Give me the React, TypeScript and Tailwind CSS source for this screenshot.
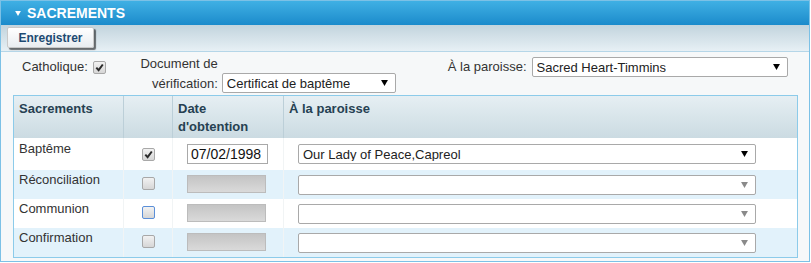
import React from 'react';

const font = { fontFamily: '"Liberation Sans", Arial, sans-serif' };

// Small browser-like checkbox
const Check: React.FC<{ checked?: boolean; focus?: boolean }> = ({ checked, focus }) => (
  <span
    className={`inline-flex h-[13px] w-[13px] items-center justify-center rounded-[2px] border bg-gradient-to-b from-[#f2f2f2] to-[#d6d6d6] ${
      focus ? 'border-[#5b8fd8]' : 'border-[#a8a8a8]'
    }`}
  >
    {checked && (
      <svg width="9" height="9" viewBox="0 0 9 9">
        <path d="M1.3 4.6 L3.6 7.1 L7.8 1.5" fill="none" stroke="#2b2b2b" strokeWidth="2" />
      </svg>
    )}
  </span>
);

const Arrow: React.FC<{ color: string; w?: number }> = ({ color, w = 7 }) => (
  <svg width={w} height={w - 1} viewBox="0 0 8 7">
    <path d="M0 0 H8 L4 7 Z" fill={color} />
  </svg>
);

const Select: React.FC<{ value?: string; className?: string; disabled?: boolean }> = ({ value, className = '', disabled }) => (
  <div
    className={`flex h-[20px] items-center justify-between rounded-[2px] border border-[#a9a9a9] bg-white pl-[4px] pr-[7px] text-[13px] text-[#222] ${className}`}
  >
    <span className="truncate leading-none">{value}</span>
    <Arrow color={disabled ? '#8a8a8a' : '#000'} />
  </div>
);

const rows = [
  { name: 'Baptême', checked: true, date: '07/02/1998', parish: 'Our Lady of Peace,Capreol' },
  { name: 'Réconciliation' },
  { name: 'Communion', focus: true },
  { name: 'Confirmation' },
];

export default function App() {
  return (
    <div className="h-[263px] w-[811px] bg-white" style={font}>
      <div className="flex h-[262px] w-[810px] flex-col border border-[#7cc1e6] bg-[#f6f8f9]">
        {/* Title bar */}
        <div className="flex h-[24px] items-center bg-gradient-to-b from-[#3fb0e4] to-[#1a8bcb] pl-[14px]">
          <span className="mr-[6px] flex">
            <Arrow color="#fff" w={6} />
          </span>
          <span className="text-[14px] font-bold text-white">SACREMENTS</span>
        </div>

        {/* Toolbar */}
        <div className="flex h-[27px] items-start border-b border-[#b5d6e8] bg-gradient-to-b from-[#c2d4dd] to-[#e7f0f5] pl-[6px] pt-[2px]">
          <button className="h-[21px] w-[87px] rounded-[2px] border border-[#c9c9c9] bg-gradient-to-b from-white to-[#e9edf0] text-[12px] font-bold text-[#1d4a72] shadow-[2px_2px_1px_rgba(0,0,0,0.55)]">
            Enregistrer
          </button>
        </div>

        {/* Form row */}
        <div className="flex items-start pl-[21px] pt-[2px] text-[13px] text-[#333]">
          <div className="mt-[3px] flex h-[20px] items-center">
            <span>Catholique:</span>
            <span className="ml-[5px] flex">
              <Check checked />
            </span>
          </div>
          <div className="ml-[32px] flex items-end">
            <div className="w-[80px] text-right leading-[20px]">Document de vérification:</div>
            <Select value="Certificat de baptême" className="mb-[1px] ml-[4px] w-[174px]" />
          </div>
          <div className="ml-[52px] mt-[3px] flex items-center">
            <span className="leading-[20px]">À la paroisse:</span>
            <Select value="Sacred Heart-Timmins" className="ml-[5px] w-[256px]" />
          </div>
        </div>

        {/* Table */}
        <div className="ml-[12px] mt-[1px] w-[785px] border border-[#8ccbea] text-[13px]">
          <div className="grid h-[42px] grid-cols-[110px_49px_111px_1fr] bg-gradient-to-b from-[#e6eff3] to-[#cbdbe2] font-bold leading-[18px] text-[#264152]">
            <div className="border-r border-[#bccfd8] pl-[5px] pt-[4px]">Sacrements</div>
            <div className="border-r border-[#bccfd8]" />
            <div className="border-r border-[#bccfd8] pl-[5px] pt-[4px]">
              Date
              <br />
              d'obtention
            </div>
            <div className="pl-[5px] pt-[4px]">À la paroisse</div>
          </div>
          {rows.map((r, i) => (
            <div
              key={r.name}
              className={`grid grid-cols-[110px_49px_111px_1fr] text-[#333] ${i === 0 ? 'h-[32px]' : 'h-[29px]'} ${
                i % 2 === 1 ? 'bg-[#e2f2fb]' : 'bg-white'
              }`}
            >
              <div className={`border-r border-[#f1f4f5] pl-[5px] ${i === 0 ? 'pt-[2px]' : 'pt-[1px]'} leading-[18px]`}>{r.name}</div>
              <div className={`flex justify-center border-r border-[#f1f4f5] ${i === 0 ? 'pt-[10px]' : 'pt-[7px]'}`}>
                <Check checked={r.checked} focus={r.focus} />
              </div>
              <div className={`border-r border-[#f1f4f5] pl-[14px] ${i === 0 ? 'pt-[6px]' : 'pt-[5px]'}`}>
                {r.date ? (
                  <div className="flex h-[20px] w-[81px] items-center border border-[#a9a9a9] bg-white pl-[3px] text-[14px] text-[#111]">
                    {r.date}
                  </div>
                ) : (
                  <div className="h-[18px] w-[79px] border border-[#bcbcbc] bg-gradient-to-b from-[#c4c4c4] to-[#dadada]" />
                )}
              </div>
              <div className={`pl-[14px] ${i === 0 ? 'pt-[6px]' : 'pt-[5px]'}`}>
                <Select value={r.parish} disabled={!r.parish} className="w-[458px]" />
              </div>
            </div>
          ))}
        </div>
      </div>
    </div>
  );
}
